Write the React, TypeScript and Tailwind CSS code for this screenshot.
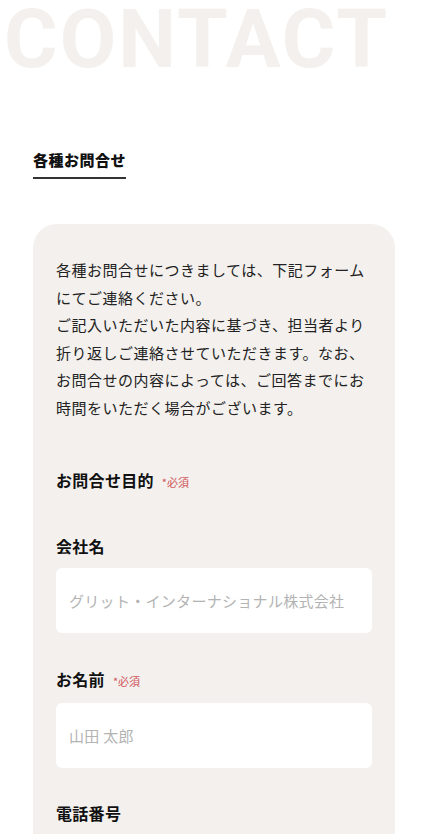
import React from "react";

const JP = "font-['Noto_Sans_CJK_JP','Noto_Sans',sans-serif]";

function Required() {
  return <span className="ml-2 text-[11px] font-normal tracking-normal text-[#d0555a]">*必須</span>;
}

function Field({ label, required, placeholder }: { label: string; required?: boolean; placeholder?: string }) {
  return (
    <div>
      <p className="flex items-baseline text-[16px] font-bold leading-[24px] tracking-[0.3px] text-[#111]">
        {label}
        {required && <Required />}
      </p>
      {placeholder && (
        <input
          type="text"
          placeholder={placeholder}
          className="mt-[10px] block h-[65px] w-full rounded-[6px] bg-white px-[13px] text-[15px] tracking-[0.3px] text-[#222] outline-none placeholder:text-[#b3b3b3]"
        />
      )}
    </div>
  );
}

export default function App() {
  return (
    <div className={`min-h-[834px] bg-white ${JP}`}>
      <h1 className="mt-[-2px] pl-[4px] font-['Roboto',sans-serif] text-[82px] font-bold leading-none tracking-[2px] text-[#f3f0ed]">
        CONTACT
      </h1>

      <div className="px-[33px]">
        <h2 className="mt-[69px] inline-block border-b-2 border-[#333] pb-[6px] text-[15px] font-black leading-[22px] tracking-[0.5px] text-[#111]">
          各種お問合せ
        </h2>

        <section className="mt-[45px] rounded-t-[24px] bg-[#f3f0ed] px-[23px] pb-10 pt-[32px]">
          <p className="text-[15px] leading-[27.6px] tracking-[0.5px] text-[#222]">
            各種お問合せにつきましては、下記フォームにてご連絡ください。
            <br />
            ご記入いただいた内容に基づき、担当者より折り返しご連絡させていただきます。なお、お問合せの内容によっては、ご回答までにお時間をいただく場合がございます。
          </p>

          <div className="mt-[46px] flex flex-col">
            <Field label="お問合せ目的" required />
            <div className="mt-[40px]">
              <Field label="会社名" placeholder="グリット・インターナショナル株式会社" />
            </div>
            <div className="mt-[34px]">
              <Field label="お名前" required placeholder="山田 太郎" />
            </div>
            <div className="mt-[33px]">
              <Field label="電話番号" placeholder="03-1234-5678" />
            </div>
          </div>
        </section>
      </div>
    </div>
  );
}
